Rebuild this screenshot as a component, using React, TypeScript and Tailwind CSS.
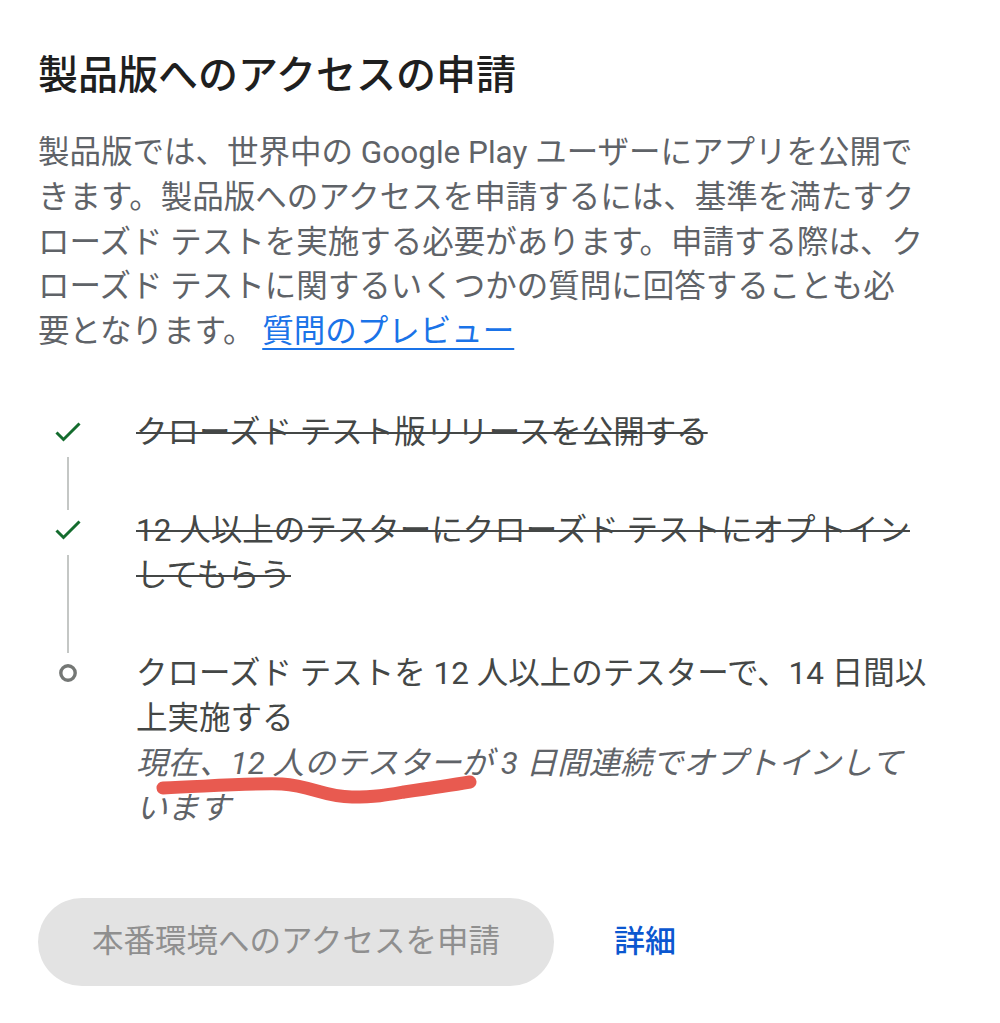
import React from "react";

const font = { fontFamily: "Roboto, 'Noto Sans CJK JP', 'Noto Sans', sans-serif" };

function CheckIcon() {
  return (
    <svg width="28" height="22" viewBox="0 0 28 22">
      <path
        d="M2.5 11.5 L9.5 18.5 L25.5 2.5"
        fill="none"
        stroke="#146c2e"
        strokeWidth="3"
        strokeLinecap="butt"
        strokeLinejoin="miter"
      />
    </svg>
  );
}

function CircleIcon() {
  return (
    <svg width="20" height="20" viewBox="0 0 20 20">
      <circle cx="10" cy="10" r="7.2" fill="none" stroke="#747775" strokeWidth="3.4" />
    </svg>
  );
}

function Step({
  icon,
  last,
  children,
}: {
  icon: React.ReactNode;
  last?: boolean;
  children: React.ReactNode;
}) {
  return (
    <div className="flex">
      <div className="flex w-[60px] shrink-0 flex-col items-center">
        <div className="flex h-[45px] items-center justify-center">{icon}</div>
        {!last && <div className="mt-[2px] mb-[-2px] w-[2px] flex-1 bg-[#c4c7c5]" />}
      </div>
      <div
        className={`relative ml-[38px] text-[31.5px] leading-[45px] whitespace-nowrap ${
          last ? "" : "pb-[53px]"
        }`}
      >
        {children}
      </div>
    </div>
  );
}

export default function App() {
  return (
    <div className="min-h-screen bg-white" style={font}>
      <div className="px-[38px] pt-[50px]">
        <h1 className="text-[40px] leading-[52px] font-medium text-[#1f1f1f] whitespace-nowrap">
          製品版へのアクセスの申請
        </h1>

        <p className="mt-[29px] text-[31.5px] leading-[44.8px] text-[#5f6368] whitespace-nowrap">
          製品版では、世界中の Google Play ユーザーにアプリを公開で
          <br />
          きます。製品版へのアクセスを申請するには、基準を満たすク
          <br />
          ローズド テストを実施する必要があります。申請する際は、ク
          <br />
          ローズド テストに関するいくつかの質問に回答することも必
          <br />
          要となります。{" "}
          <a href="#" className="text-[#1a73e8] underline decoration-[2px] underline-offset-[6px]">
            質問のプレビュー
          </a>
        </p>

        <div className="mt-[55px] flex flex-col">
          <Step icon={<CheckIcon />}>
            <span className="text-[#444746] line-through decoration-[2px]">
              クローズド テスト版リリースを公開する
            </span>
          </Step>
          <Step icon={<CheckIcon />}>
            <span className="text-[#444746] line-through decoration-[2px]">
              12 人以上のテスターにクローズド テストにオプトイン
              <br />
              してもらう
            </span>
          </Step>
          <Step icon={<CircleIcon />} last>
            <div className="text-[#444746]">
              クローズド テストを 12 人以上のテスターで、14 日間以
              <br />
              上実施する
            </div>
            <div className="italic text-[#5f6368]">
              現在、12 人のテスターが 3 日間連続でオプトインして
              <br />
              います
            </div>
            <svg
              className="pointer-events-none absolute left-[16px] top-[122px]"
              width="346"
              height="34"
              viewBox="0 0 346 34"
            >
              <path
                d="M11 15 C 60 13, 100 10, 130 11 C 160 13, 172 24, 200 24 C 225 24, 235 22, 252 19 C 280 15, 300 12, 318 9"
                fill="none"
                stroke="#e85a50"
                strokeWidth="13"
                strokeLinecap="round"
                strokeLinejoin="round"
              />
            </svg>
          </Step>
        </div>

        <div className="mt-[67px] flex items-center">
          <button
            disabled
            className="flex h-[88px] w-[516px] items-center justify-center rounded-full bg-[#e3e3e3] text-[31.5px] text-[#8f8f8f]"
            style={font}
          >
            本番環境へのアクセスを申請
          </button>
          <a href="#" className="ml-[60px] text-[31px] font-medium text-[#0b57d0]">
            詳細
          </a>
        </div>
      </div>
    </div>
  );
}
